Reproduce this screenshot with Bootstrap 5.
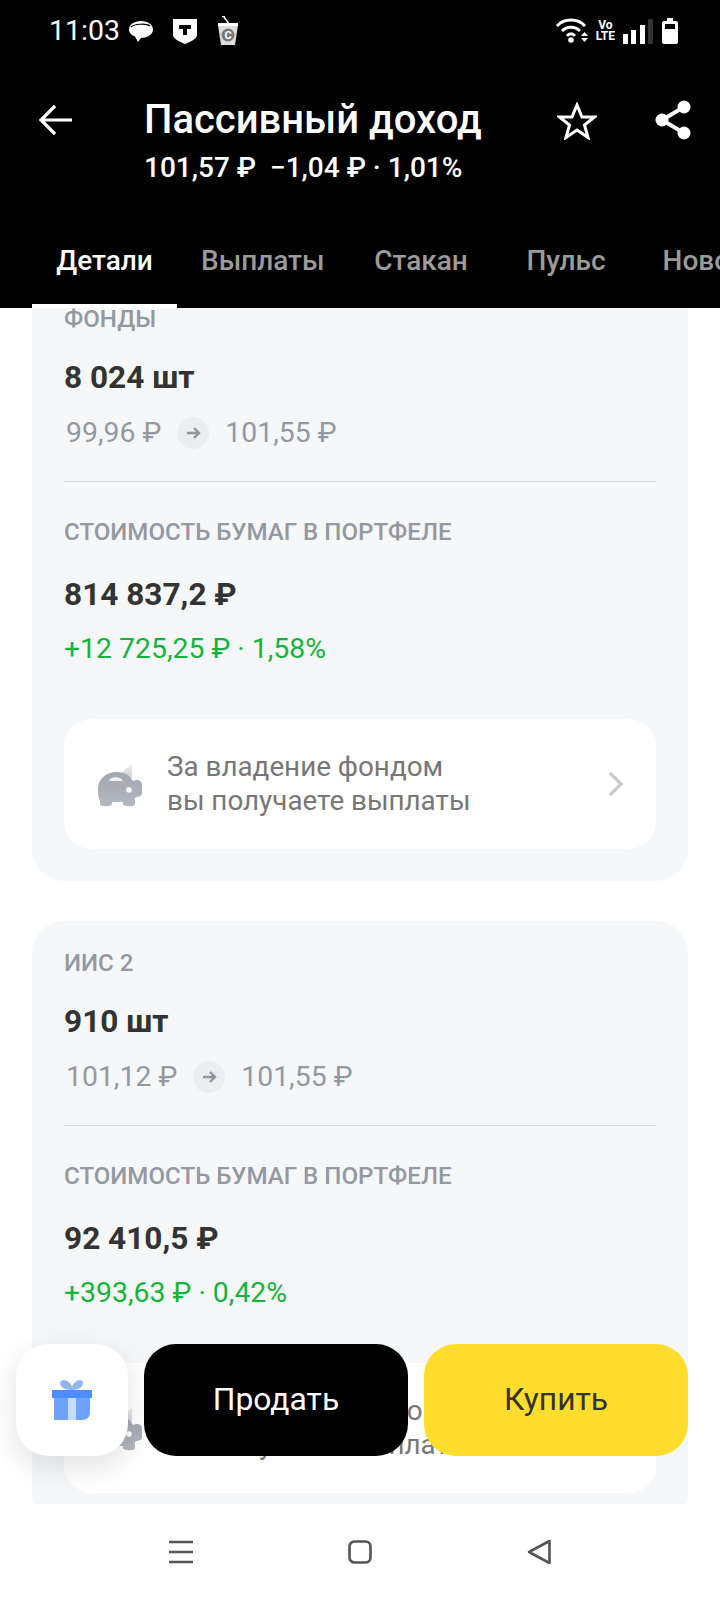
<!DOCTYPE html>
<html lang="ru">
<head>
    <meta charset="UTF-8">
    <meta name="viewport" content="width=device-width, initial-scale=1.0">
    <title>Пассивный доход</title>
    <link href="https://cdn.jsdelivr.net/npm/bootstrap@5.3.0/dist/css/bootstrap.min.css" rel="stylesheet">
    <style>
        body {
            background: #fff;
            font-family: Roboto, "Liberation Sans", sans-serif;
        }
        .phone {
            width: 720px;
            height: 1600px;
            overflow: hidden;
        }
        .top-bar {
            height: 308px;
            flex: none;
            background: #000;
            color: #fff;
        }
        .status-row {
            height: 62px;
            padding: 0 42px 0 49px;
            font-size: 28.5px;
        }
        .status-left-icon {
            margin-left: 8px;
        }
        .status-gap-icon {
            margin-left: 18px;
        }
        .title-row {
            height: 128px;
            padding-left: 39px;
            padding-right: 28px;
        }
        .back-icon {
            margin-top: -12px;
        }
        .title-text {
            margin-left: 71px;
            margin-top: 29px;
            width: 380px;
        }
        .title-main {
            font-size: 40px;
            line-height: 48px;
            font-weight: 500;
            white-space: nowrap;
        }
        .title-sub {
            font-size: 28px;
            line-height: 34px;
            margin-top: 7px;
            font-weight: 500;
            white-space: nowrap;
        }
        .star-icon {
            margin-left: auto;
            margin-top: -10px;
        }
        .share-icon {
            margin-left: 57px;
            margin-top: -12px;
        }
        .tabs-row {
            height: 118px;
            padding-left: 32px;
            overflow: hidden;
        }
        .tab-item {
            flex: none;
            min-width: 145px;
            height: 118px;
            padding: 41px 24px 0;
            line-height: 60px;
            text-align: center;
            font-size: 28px;
            font-weight: 500;
            color: #9b9b9b;
            white-space: nowrap;
            border-bottom: 4px solid transparent;
        }
        .tab-item.is-active {
            color: #fff;
            border-bottom-color: #fff;
        }
        .scroll-area {
            flex: 1 1 0;
            overflow: hidden;
        }
        .pos-list {
            margin-top: -31px;
            padding: 0 32px;
            gap: 40px;
        }
        .pos-card {
            background: #f6f7f8;
            border-radius: 32px;
            padding: 23px 32px 32px;
        }
        .pos-label {
            font-size: 24.1px;
            line-height: 38px;
            font-weight: 500;
            color: #9299a2;
            white-space: nowrap;
        }
        .pos-big {
            font-size: 31.600px;
            line-height: 40px;
            font-weight: 700;
            color: #333;
        }
        .pos-prices {
            height: 40px;
            margin-top: 15px;
            padding-left: 2px;
            font-size: 28.4px;
            color: #9299a2;
            gap: 16px;
        }
        .arrow-dot {
            width: 32px;
            height: 32px;
            border-radius: 50%;
            background: #ecedee;
        }
        .pos-line {
            height: 1px;
            background: #d5d9dc;
            margin: 28px 0 31px;
        }
        .pos-change {
            font-size: 28.4px;
            line-height: 36px;
            color: #14b43c;
            margin-top: 16px;
        }
        .promo-box {
            height: 130px;
            margin-top: 52px;
            padding: 0 32px 0 34px;
            background: #fff;
            border-radius: 28px;
            font-size: 27.8px;
            line-height: 34px;
            color: #777;
        }
        .promo-text {
            margin-left: 25px;
        }
        .action-row {
            position: absolute;
            left: 16px;
            right: 32px;
            top: 1344px;
            height: 112px;
            gap: 16px;
        }
        .gift-btn {
            width: 112px;
            background: #fff;
            border-radius: 32px;
            box-shadow: 0 10px 30px rgba(0, 0, 0, .12);
        }
        .trade-btn {
            width: 264px;
            border: 0;
            border-radius: 32px;
            font-size: 31.8px;
        }
        .sell-btn {
            background: #000;
            color: #fff;
        }
        .buy-btn {
            background: #ffdd2d;
            color: #333;
        }
        .bottom-nav {
            height: 96px;
            flex: none;
            background: #fff;
            gap: 154px;
        }
    </style>
</head>
<body>
    <div class="phone position-relative d-flex flex-column">
        <div class="top-bar">
            <div class="status-row d-flex align-items-center justify-content-between">
                <div class="d-flex align-items-center">
                    <span>11:03</span>
                    <svg class="status-left-icon" width="26" height="26" viewBox="0 0 26 26"><path d="M13 3C6 3 1 7 1 11.500C1 15 4 17.500 7 18.500L10 24L13 20C20 20 25 16 25 11.500C25 7 20 3 13 3Z" fill="#fff"/><path d="M3 9C6 6 18 5 22 8" stroke="#000" stroke-width="1.200" fill="none"/></svg>
                    <svg class="status-gap-icon" width="26" height="28" viewBox="0 0 26 28"><path d="M1 2H25V18C25 22 18 25 13 27C8 25 1 22 1 18Z" fill="#fff"/><path d="M7 8H19V12H15V18H11V12H7Z" fill="#000"/></svg>
                    <svg class="status-gap-icon" width="24" height="30" viewBox="0 0 24 30"><path d="M2 9H22L19 29H5Z" fill="#ddd"/><path d="M2 7H22V10H2Z" fill="#fff"/><path d="M6 0L9 1M8 1L13 8" stroke="#fff" stroke-width="1.500"/><circle cx="12" cy="19" r="6.500" fill="#777"/><text x="12" y="23" font-size="11" font-weight="700" fill="#fff" text-anchor="middle">C</text></svg>
                </div>
                <div class="d-flex align-items-center gap-2">
                    <svg width="32" height="26" viewBox="0 0 32 26"><path d="M1 8C8 0 22 0 29 8M6 13C11 8 19 8 24 13M11 18C13 15 17 15 19 18" stroke="#fff" stroke-width="2.800" fill="none"/><circle cx="15" cy="22" r="2.800" fill="#fff"/><path d="M25 18H32L28.500 14ZM25 20H32L28.500 24Z" fill="#fff"/></svg>
                    <div class="d-flex flex-column text-center fw-bold" style="font-size:12px;line-height:11px">
                        <span>Vo</span><span>LTE</span>
                    </div>
                    <svg width="31" height="25" viewBox="0 0 31 25"><rect x="0" y="15" width="5" height="10" fill="#fff"/><rect x="8" y="11" width="5" height="14" fill="#fff"/><rect x="17" y="6" width="5" height="19" fill="#fff"/><rect x="25" y="0" width="5" height="25" fill="#333"/></svg>
                    <svg width="16" height="26" viewBox="0 0 16 26"><path d="M5 0H11V3H14C15 3 16 4 16 5V24C16 25 15 26 14 26H2C1 26 0 25 0 24V5C0 4 1 3 2 3H5Z" fill="#fff"/><rect x="3" y="6" width="10" height="5" fill="#000"/></svg>
                </div>
            </div>
            <div class="title-row d-flex align-items-center">
                <svg class="back-icon" width="34" height="32" viewBox="0 0 34 32"><path d="M16 2L2 16L16 30M2 16H33" stroke="#fff" stroke-width="3.200" fill="none"/></svg>
                <div class="title-text">
                    <div class="title-main">Пассивный доход</div>
                    <div class="title-sub">101,57 ₽&nbsp; −1,04 ₽ · 1,01%</div>
                </div>
                <svg class="star-icon" width="40" height="38" viewBox="0 0 40 38"><path d="M20 3L25 15H37.500L27.500 23L31 35.500L20 28L9 35.500L12.500 23L2.500 15H15Z" stroke="#fff" stroke-width="3" fill="none"/></svg>
                <svg class="share-icon" width="38" height="40" viewBox="0 0 38 40"><path d="M30 7L8 20L30 33" stroke="#fff" stroke-width="4" fill="none"/><circle cx="30" cy="7" r="6.500" fill="#fff"/><circle cx="8" cy="20" r="6.500" fill="#fff"/><circle cx="30" cy="33" r="6.500" fill="#fff"/></svg>
            </div>
            <div class="tabs-row d-flex">
                <div class="tab-item is-active">Детали</div>
                <div class="tab-item">Выплаты</div>
                <div class="tab-item">Стакан</div>
                <div class="tab-item">Пульс</div>
                <div class="tab-item">Новости</div>
            </div>
        </div>

        <div class="scroll-area">
            <div class="pos-list d-flex flex-column">
                <div class="pos-card">
                    <div class="pos-label">ФОНДЫ</div>
                    <div class="pos-big" style="margin-top:20px">8 024 шт</div>
                    <div class="pos-prices d-flex align-items-center">
                        <span>99,96 ₽</span>
                        <span class="arrow-dot d-flex align-items-center justify-content-center">
                            <svg width="16" height="14" viewBox="0 0 16 14"><path d="M9 2L14 7L9 12M14 7H2" stroke="#8f959c" stroke-width="2.400" fill="none"/></svg>
                        </span>
                        <span>101,55 ₽</span>
                    </div>
                    <div class="pos-line"></div>
                    <div class="pos-label">СТОИМОСТЬ БУМАГ В ПОРТФЕЛЕ</div>
                    <div class="pos-big" style="margin-top:24px">814 837,2 ₽</div>
                    <div class="pos-change">+12 725,25 ₽ · 1,58%</div>
                    <div class="promo-box d-flex align-items-center">
                        <svg width="44" height="46" viewBox="0 0 44 46"><defs><linearGradient id="pg1" x1="0" y1="0" x2="0" y2="1"><stop offset="0" stop-color="#a2a6ae"/><stop offset="1" stop-color="#b4b8bf"/></linearGradient><linearGradient id="pg2" x1="0" y1="0" x2="0" y2="1"><stop offset="0" stop-color="#eeeff0"/><stop offset="1" stop-color="#d0d2d5"/></linearGradient></defs><path d="M34 3C29 6 25 10 23 14L34 17Z" fill="url(#pg2)"/><path d="M19 11C26 11 32 14 35 20L38 19C42 19 44 21 44 24V32C44 35 41 36 38 36C36 38 37 38 37 40V43C37 46 25 46 25 43V41H14V43C14 46 2 46 2 43V40C0 36 0 32 0 28C0 18 8 11 19 11Z" fill="url(#pg1)"/><path d="M11 20C12 15 23 15 25 20Z" fill="#fff" opacity=".85"/><circle cx="31" cy="29" r="2.800" fill="#fff"/></svg>
                        <div class="promo-text">За владение фондом<br>вы получаете выплаты</div>
                        <svg class="ms-auto" width="16" height="26" viewBox="0 0 16 26"><path d="M2 2L13 13L2 24" stroke="#ccced0" stroke-width="3.500" fill="none"/></svg>
                    </div>
                </div>

                <div class="pos-card">
                    <div class="pos-label">ИИС 2</div>
                    <div class="pos-big" style="margin-top:20px">910 шт</div>
                    <div class="pos-prices d-flex align-items-center">
                        <span>101,12 ₽</span>
                        <span class="arrow-dot d-flex align-items-center justify-content-center">
                            <svg width="16" height="14" viewBox="0 0 16 14"><path d="M9 2L14 7L9 12M14 7H2" stroke="#8f959c" stroke-width="2.400" fill="none"/></svg>
                        </span>
                        <span>101,55 ₽</span>
                    </div>
                    <div class="pos-line"></div>
                    <div class="pos-label">СТОИМОСТЬ БУМАГ В ПОРТФЕЛЕ</div>
                    <div class="pos-big" style="margin-top:24px">92 410,5 ₽</div>
                    <div class="pos-change">+393,63 ₽ · 0,42%</div>
                    <div class="promo-box d-flex align-items-center">
                        <svg width="44" height="46" viewBox="0 0 44 46"><path d="M34 3C29 6 25 10 23 14L34 17Z" fill="url(#pg2)"/><path d="M19 11C26 11 32 14 35 20L38 19C42 19 44 21 44 24V32C44 35 41 36 38 36C36 38 37 38 37 40V43C37 46 25 46 25 43V41H14V43C14 46 2 46 2 43V40C0 36 0 32 0 28C0 18 8 11 19 11Z" fill="url(#pg1)"/><path d="M11 20C12 15 23 15 25 20Z" fill="#fff" opacity=".85"/><circle cx="31" cy="29" r="2.800" fill="#fff"/></svg>
                        <div class="promo-text">За владение фондом<br>вы получаете выплаты</div>
                        <svg class="ms-auto" width="16" height="26" viewBox="0 0 16 26"><path d="M2 2L13 13L2 24" stroke="#ccced0" stroke-width="3.500" fill="none"/></svg>
                    </div>
                </div>
            </div>
        </div>

        <div class="bottom-nav d-flex align-items-center justify-content-center">
            <svg width="26" height="24" viewBox="0 0 26 24"><path d="M1 2H25M1 12H25M1 22H25" stroke="#555" stroke-width="2.600"/></svg>
            <svg width="24" height="24" viewBox="0 0 24 24"><rect x="1.500" y="1.500" width="21" height="21" rx="5" stroke="#555" stroke-width="2.600" fill="none"/></svg>
            <svg width="26" height="26" viewBox="0 0 26 26"><path d="M23.500 2L3 13L23.500 24Z" stroke="#555" stroke-width="2.600" stroke-linejoin="round" fill="none"/></svg>
        </div>

        <div class="action-row d-flex">
            <div class="gift-btn d-flex align-items-center justify-content-center">
                <svg width="40" height="40" viewBox="0 0 40 40"><path d="M19 10C13 10 8 7 8 3C8 1 10 0 12 0C15 0 19 3 20 7C21 3 25 0 28 0C30 0 31 1 31 3C31 7 26 10 21 10Z" fill="#8fb4f7"/><rect x="0" y="10" width="40" height="8" fill="#4d8dff"/><path d="M2 18H38V32C38 37 35 40 30 40H2Z" fill="#6ea3ff"/><rect x="16" y="18" width="8" height="22" fill="#c5dbff"/></svg>
            </div>
            <button class="trade-btn sell-btn" type="button">Продать</button>
            <button class="trade-btn buy-btn" type="button">Купить</button>
        </div>
    </div>
    <script src="https://cdn.jsdelivr.net/npm/bootstrap@5.3.0/dist/js/bootstrap.bundle.min.js"></script>
</body>
</html>
